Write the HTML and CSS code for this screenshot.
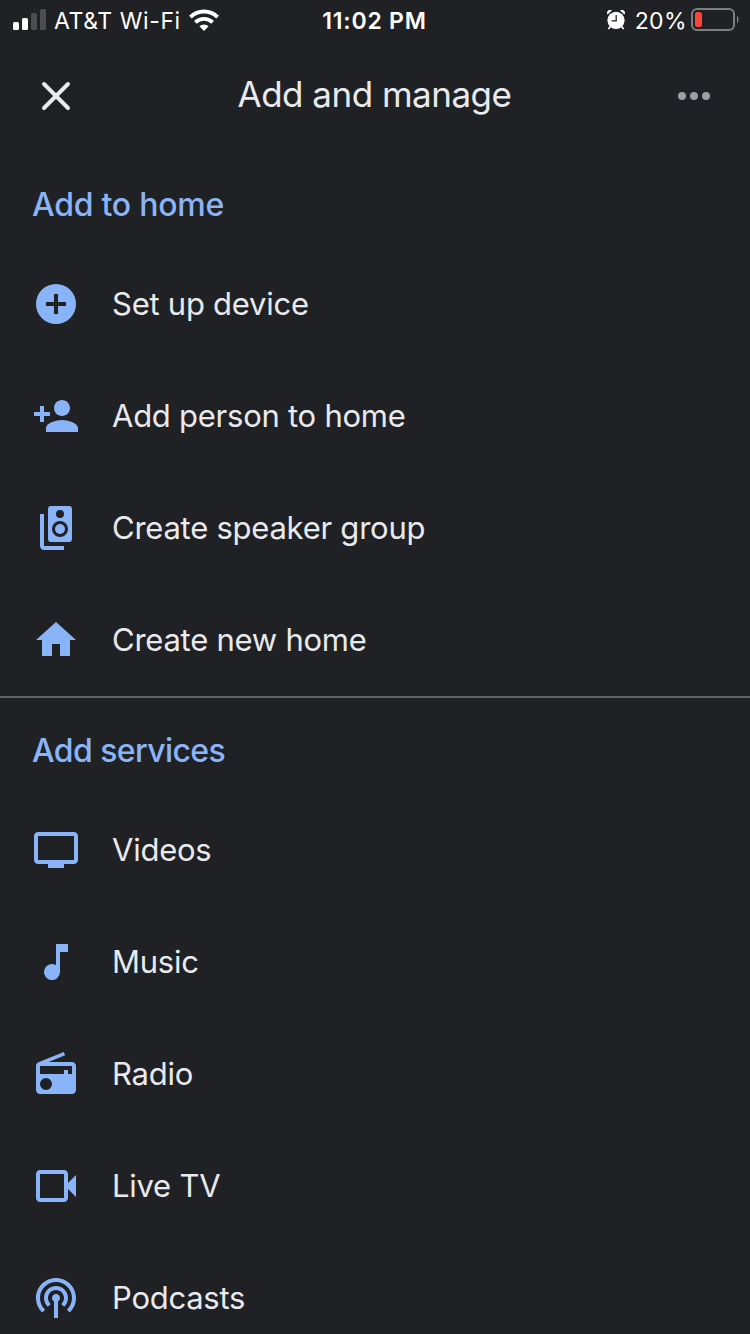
FILE: index.html
```html
<!DOCTYPE html>
<html lang="en">

<head>
    <meta charset="UTF-8">
    <meta name="viewport" content="width=device-width, initial-scale=1.0">
    <title>Add and manage</title>
    <link rel="stylesheet" href="styles.css">
</head>

<body>
    <div class="screen">
        <!-- Status bar -->
        <div class="status-bar">
            <div class="status-left">
                <svg class="signal" width="34" height="22" viewBox="0 0 34 22">
                    <rect x="0" y="13" width="6" height="8" rx="1.5" fill="#fff"/>
                    <rect x="9" y="9" width="6" height="12" rx="1.5" fill="#fff"/>
                    <rect x="18" y="4" width="6" height="17" rx="1.5" fill="#4d4e50"/>
                    <rect x="27" y="0" width="6" height="21" rx="1.5" fill="#4d4e50"/>
                </svg>
                <span class="carrier">AT&amp;T Wi-Fi</span>
                <svg class="wifi" width="30" height="22" viewBox="0 0 30 22" fill="none" stroke="#fff">
                    <path d="M1.4 8.2a19.3 19.3 0 0 1 27.2 0" stroke-width="4"/>
                    <path d="M6.4 13.4a12.2 12.2 0 0 1 17.2 0" stroke-width="3.8"/>
                    <path d="M15 22l-4.6-4.7a6.6 6.6 0 0 1 9.2 0z" fill="#fff" stroke="none"/>
                </svg>
            </div>
            <div class="clock">11:02 PM</div>
            <div class="status-right">
                <svg class="alarm" width="18" height="20" viewBox="0 0 18 20">
                    <path d="M0.6 4.6A3 3 0 0 1 5 0.6zM17.4 4.6A3 3 0 0 0 13 0.6z" fill="#fff"/>
                    <path d="M3.5 16.5L1.3 19M14.5 16.5l2.2 2.5" stroke="#fff" stroke-width="1.8"/>
                    <circle cx="9" cy="10.3" r="8.6" fill="#fff"/>
                    <path d="M9.2 5v5.8H4.6" fill="none" stroke="#202124" stroke-width="1.3"/>
                </svg>
                <span class="percent">20%</span>
                <svg class="battery" width="48" height="24" viewBox="0 0 48 24">
                    <rect x="1" y="1" width="42" height="21" rx="5" fill="none" stroke="#7d7e80" stroke-width="2"/>
                    <rect x="4" y="4" width="7" height="15" rx="2.5" fill="#ff453a"/>
                    <path d="M46 7.5c2 1.2 2 6.8 0 8z" fill="#7d7e80"/>
                </svg>
            </div>
        </div>

        <!-- Header -->
        <header class="header">
            <svg class="close" width="48" height="48" viewBox="0 0 48 48">
                <path d="M12 12l24 24M36 12L12 36" stroke="#e8eaed" stroke-width="4" stroke-linecap="round"/>
            </svg>
            <h1 class="title">Add and manage</h1>
            <svg class="more" width="32" height="8" viewBox="0 0 32 8" fill="#9aa0a6">
                <circle cx="4" cy="4" r="4"/>
                <circle cx="16" cy="4" r="4"/>
                <circle cx="28" cy="4" r="4"/>
            </svg>
        </header>

        <!-- Add to home -->
        <section class="section-home">
            <h2 class="section-title">Add to home</h2>
            <div class="item">
                <svg class="icon" viewBox="0 0 24 24"><path d="M12 2a10 10 0 1 0 0 20 10 10 0 0 0 0-20zm5 11h-4v4h-2v-4H7v-2h4V7h2v4h4z"/></svg>
                <span class="label">Set up device</span>
            </div>
            <div class="item">
                <svg class="icon" viewBox="0 0 24 24"><path d="M15 12c2.21 0 4-1.79 4-4s-1.79-4-4-4-4 1.79-4 4 1.79 4 4 4zm-9-2V7H4v3H1v2h3v3h2v-3h3v-2zm9 4c-2.67 0-8 1.34-8 4v2h16v-2c0-2.66-5.33-4-8-4z"/></svg>
                <span class="label">Add person to home</span>
            </div>
            <div class="item">
                <svg class="icon" viewBox="0 0 24 24">
                    <path fill-rule="evenodd" d="M9.5 1h9A1.5 1.5 0 0 1 20 2.5v15a1.5 1.5 0 0 1-1.5 1.5h-9A1.5 1.5 0 0 1 8 17.5v-15A1.5 1.5 0 0 1 9.5 1zM14 3a2 2 0 1 0 0 4 2 2 0 0 0 0-4zm0 5.5a4 4 0 1 0 0 8 4 4 0 0 0 0-8z"/>
                    <circle cx="14" cy="12.5" r="2.5"/>
                    <path d="M6 5H4v16c0 1.1.9 2 2 2h10v-2H6z"/>
                </svg>
                <span class="label">Create speaker group</span>
            </div>
            <div class="item">
                <svg class="icon" viewBox="0 0 24 24"><path d="M10 20v-6h4v6h5v-8h3L12 3 2 12h3v8z"/></svg>
                <span class="label">Create new home</span>
            </div>
        </section>

        <!-- Add services -->
        <section class="section-services">
            <h2 class="section-title">Add services</h2>
            <div class="item">
                <svg class="icon" viewBox="0 0 24 24"><path fill-rule="evenodd" d="M3 3h18c1.1 0 2 .9 2 2v12c0 1.1-.9 2-2 2h-5v2H8v-2H3c-1.1 0-2-.9-2-2V5c0-1.1.9-2 2-2zm0 2v12h18V5z"/></svg>
                <span class="label">Videos</span>
            </div>
            <div class="item">
                <svg class="icon" viewBox="0 0 24 24"><path d="M12 3v10.55A4 4 0 1 0 14 17V7h4V3z"/></svg>
                <span class="label">Music</span>
            </div>
            <div class="item">
                <svg class="icon" viewBox="0 0 24 24"><path fill-rule="evenodd" d="M3.24 6.15C2.51 6.43 2 7.17 2 8v12c0 1.1.9 2 2 2h16c1.1 0 2-.9 2-2V8c0-1.1-.9-2-2-2H8.3l8.26-3.34L15.88 1zM7 14a3 3 0 1 1 0 6 3 3 0 0 1 0-6zM4 8h16v4h-2v-2h-2v2H4z"/></svg>
                <span class="label">Radio</span>
            </div>
            <div class="item">
                <svg class="icon" viewBox="0 0 24 24"><path fill-rule="evenodd" d="M4 4h12c1.1 0 2 .9 2 2v4.5l4-4v11l-4-4V18c0 1.1-.9 2-2 2H4c-1.1 0-2-.9-2-2V6c0-1.1.9-2 2-2zm0 2v12h12V6z"/></svg>
                <span class="label">Live TV</span>
            </div>
            <div class="item">
                <svg class="icon" viewBox="0 0 24 24"><path d="M14 12c0 .74-.4 1.38-1 1.72V22h-2v-8.28c-.6-.35-1-.98-1-1.72 0-1.1.9-2 2-2s2 .9 2 2zm-2-6c-3.31 0-6 2.69-6 6 0 1.74.75 3.31 1.94 4.4l1.42-1.42C8.53 14.25 8 13.19 8 12c0-2.21 1.79-4 4-4s4 1.79 4 4c0 1.19-.53 2.25-1.36 2.98l1.42 1.42C17.25 15.31 18 13.74 18 12c0-3.31-2.69-6-6-6zm0-4C6.48 2 2 6.48 2 12c0 2.85 1.2 5.41 3.11 7.24l1.42-1.42C4.98 16.36 4 14.29 4 12c0-4.41 3.59-8 8-8s8 3.59 8 8c0 2.29-.98 4.36-2.53 5.82l1.42 1.42C20.8 17.41 22 14.85 22 12c0-5.52-4.48-10-10-10z"/></svg>
                <span class="label">Podcasts</span>
            </div>
        </section>
    </div>
</body>

</html>
```
FILE: styles.css
```css
* {
    box-sizing: border-box;
}

body {
    margin: 0;
    background: #202124;
    color: #e8eaed;
    font-family: Inter, "Liberation Sans", sans-serif;
}

.screen {
    width: 750px;
    height: 1334px;
    overflow: hidden;
}
/* Status bar */

.status-bar {
    display: grid;
    grid-template-columns: 1fr auto 1fr;
    align-items: center;
    height: 40px;
    padding: 0 11px 2px 13px;
    color: #fff;
    font-size: 23px;
    line-height: 32px;
}

.status-left,
.status-right {
    display: flex;
    align-items: center;
}

.signal,
.wifi {
    margin-top: 2px;
}

.status-right {
    justify-content: flex-end;
}

.carrier {
    margin: 3px 8px 0 7px;
    letter-spacing: 0.6px;
}

.clock {
    padding-top: 3px;
    margin-left: -3px;
    font-weight: 600;
    letter-spacing: 0.8px;
}

.alarm {
    margin-top: 1px;
}

.percent {
    margin: 3px 4px 0 10px;
    letter-spacing: 0.4px;
}

.battery {
    margin-top: 2px;
}
/* Header */

.header {
    display: grid;
    grid-template-columns: 1fr auto 1fr;
    align-items: center;
    height: 112px;
    padding: 0 40px 0 32px;
}

.title {
    margin: 0 0 4px 7px;
    font-size: 35px;
    font-weight: 400;
    letter-spacing: -0.5px;
}

.more {
    justify-self: end;
}
/* Sections */

.section-home {
    padding-top: 8px;
    border-bottom: 2px solid #5f6368;
}

.section-title {
    display: flex;
    align-items: center;
    height: 88px;
    margin: 0;
    padding-left: 32px;
    color: #8ab4f8;
    font-size: 32px;
    font-weight: 500;
    letter-spacing: -0.25px;
}

.section-services .section-title {
    height: 96px;
    padding-top: 8px;
    letter-spacing: -0.6px;
}

.item {
    display: flex;
    align-items: center;
    gap: 32px;
    height: 112px;
    padding-left: 32px;
}

.icon {
    width: 48px;
    height: 48px;
    fill: #8ab4f8;
}

.label {
    padding-bottom: 2px;
    font-size: 31px;
    letter-spacing: -0.25px;
}
```
